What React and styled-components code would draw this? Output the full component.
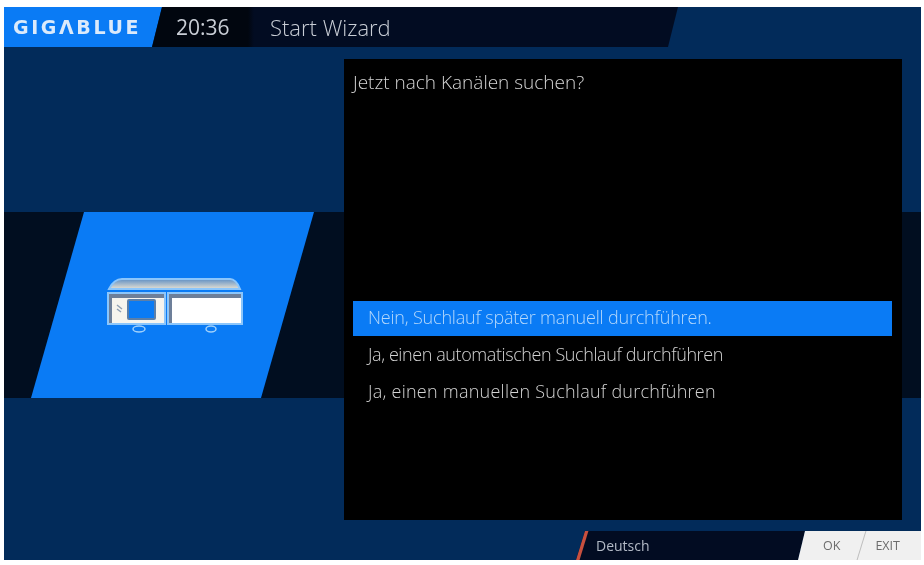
import React from "react";
import styled, { createGlobalStyle } from "styled-components";

const Global = createGlobalStyle`
  html, body { margin: 0; padding: 0; background: #fff; }
  body { font-family: "Open Sans", "Noto Sans", sans-serif; }
`;
const Page = styled.div`
  width: 924px; height: 565px; box-sizing: border-box; padding: 7px 3px 5px 4px; overflow: hidden;
`;
const Screen = styled.div`
  height: 100%; display: flex; flex-direction: column; background: #022b5a; filter: blur(0.6px);
`;
const Header = styled.header`
  height: 40px; flex: none; display: flex; align-items: stretch;
`;
const Logo = styled.div`
  width: 158px; flex: none; display: flex; align-items: center; padding-left: 9px; box-sizing: border-box;
  background: #0a7bf5; clip-path: polygon(0 0, 100% 0, calc(100% - 10px) 100%, 0 100%);
  color: #dbeafb; font: 700 19px "DejaVu Sans", sans-serif; letter-spacing: 2.6px; white-space: nowrap;
`;
const TitleBar = styled.div`
  width: 526px; margin-left: -10px; flex: none; display: flex; align-items: center;
  background: linear-gradient(90deg, #01060f 0, #01060f 96px, #020c22 102px, #020c22 100%);
  clip-path: polygon(10px 0, 100% 0, calc(100% - 10px) 100%, 0 100%);
  color: #c9ced6; font-weight: 300; font-size: 22px;
`;
const Clock = styled.span`margin-left: 24px; width: 94px; flex: none; font-weight: 400; font-size: 21px;`;
const Title = styled.span``;
const Main = styled.main`
  flex: 1; display: grid; grid-template-columns: 340px 558px 19px; padding: 12px 0 11px; min-height: 0;
  background: linear-gradient(180deg, #022b5a 0 165px, #010e20 165px 351px, #022b5a 351px 100%);
`;
const Side = styled.div`padding: 153px 0 0 27px;`;
const Tile = styled.div`
  width: 283px; height: 186px; display: flex; align-items: center; justify-content: center;
  padding-left: 4px; box-sizing: border-box;
  background: #0a7bf5; clip-path: polygon(53px 0, 100% 0, 230px 100%, 0 100%);
`;
const Panel = styled.section`
  background: #000; display: flex; flex-direction: column; padding: 9px 10px 0 9px; color: #d3d3d3;
  font-weight: 300; font-size: 18px;
`;
const Question = styled.div`line-height: 28px; height: 233px; font-size: 19px;`;
const List = styled.ul`list-style: none; margin: 0; padding: 0;`;
const Row = styled.li`
  height: ${p => (p.$active ? "35px" : "37px")}; line-height: ${p => (p.$active ? "33px" : "37px")};
  padding-left: 15px; white-space: nowrap; letter-spacing: ${p => p.$track}px;
  background: ${p => (p.$active ? "#0a7bf5" : "transparent")};
  color: ${p => (p.$active ? "#b5d8fb" : "#d3d3d3")};
`;
const Footer = styled.footer`
  height: 29px; flex: none; display: flex; justify-content: flex-end; background: #022b5a;
`;
const Lang = styled.div`
  width: 229px; flex: none; display: flex; align-items: center; gap: 12px; padding-left: 4px; box-sizing: border-box;
  background: #020c22; clip-path: polygon(9px 0, 100% 0, calc(100% - 7px) 100%, 0 100%);
  color: #b3bac6; font-size: 14px;
`;
const Slash = styled.span`
  width: 4px; height: 100%; flex: none; background: #c8503f; transform: skewX(-17deg);
`;
const Keys = styled.div`
  width: 123px; margin-left: -7px; flex: none; display: flex; align-items: center; box-sizing: border-box;
  padding-left: 25px; background: #f0f0f0; clip-path: polygon(7px 0, 100% 0, 100% 100%, 0 100%);
  color: #6c6c6c; font-size: 12.5px;
`;
const KeySlash = styled.span`
  width: 1px; height: 100%; flex: none; background: #bdbdbd; transform: skewX(-17deg); margin: 0 13px 0 21px;
`;

const StbIcon = () => (
  <svg width="137" height="56" viewBox="0 0 137 56" fill="none">
    <defs>
      <linearGradient id="lid" x1="0" y1="0" x2="0" y2="1">
        <stop offset="0" stopColor="#5f8fc4" />
        <stop offset="1" stopColor="#e6e0d2" />
      </linearGradient>
    </defs>
    <path d="M3 12 Q8 2 16 2 H124 Q130 2 134 12 Z" fill="url(#lid)" stroke="#8cc6fb" strokeWidth="2" />
    <rect x="2" y="16" width="57" height="31" fill="#f6f4ee" stroke="#8cc6fb" strokeWidth="2" />
    <rect x="3" y="17" width="55" height="4" fill="#6d7f99" />
    <rect x="3" y="17" width="3" height="29" fill="#6d7f99" />
    <rect x="22" y="23" width="27" height="19" rx="1" fill="#0a7bf5" stroke="#5c7fa8" strokeWidth="2" />
    <path d="M11 28 l5 4 M11 32 l4 3" stroke="#8fa0b5" strokeWidth="1.5" />
    <rect x="62" y="16" width="74" height="31" fill="#fff" stroke="#8cc6fb" strokeWidth="2" />
    <rect x="63" y="17" width="72" height="4" fill="#6d7f99" />
    <rect x="63" y="17" width="3" height="29" fill="#6d7f99" />
    <ellipse cx="33" cy="52" rx="6" ry="3" stroke="#9fd0fb" strokeWidth="1.5" fill="#0a7bf5" />
    <ellipse cx="105" cy="52" rx="5" ry="3" stroke="#9fd0fb" strokeWidth="1.5" fill="#0a7bf5" />
  </svg>
);

export default function App() {
  return (
    <Page>
      <Global />
      <Screen>
        <Header>
          <Logo>GIGΛBLUE</Logo>
          <TitleBar>
            <Clock>20:36</Clock>
            <Title>Start Wizard</Title>
          </TitleBar>
        </Header>
        <Main>
          <Side>
            <Tile><StbIcon /></Tile>
          </Side>
          <Panel>
            <Question>Jetzt nach Kanälen suchen?</Question>
            <List>
              <Row $active $track={-0.19}>Nein, Suchlauf später manuell durchführen.</Row>
              <Row $track={-0.41}>Ja, einen automatischen Suchlauf durchführen</Row>
              <Row $track={0.25}>Ja, einen manuellen Suchlauf durchführen</Row>
            </List>
          </Panel>
          <div />
        </Main>
        <Footer>
          <Lang><Slash />Deutsch</Lang>
          <Keys>OK<KeySlash />EXIT</Keys>
        </Footer>
      </Screen>
    </Page>
  );
}
